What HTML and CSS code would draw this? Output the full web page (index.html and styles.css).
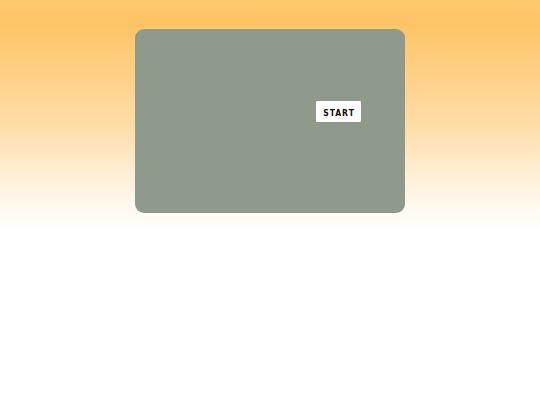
FILE: index.html
```html
<!DOCTYPE html>
<html>
<head>
<meta charset="utf-8">
<link rel="stylesheet" href="styles.css">
</head>
<body>
<div class="stage">
  <div class="game">
    <button class="start">START</button>
  </div>
</div>
</body>
</html>
```
FILE: styles.css
```css
html, body {
  margin: 0;
  padding: 0;
  height: 100%;
}
body {
  background: linear-gradient(to bottom, #fec96d 0%, #fec466 6%, #fedba5 30%, #fff1dc 45%, #fffbf5 53%, #ffffff 57%, #ffffff 100%);
  font-family: "DejaVu Sans", sans-serif;
}
.stage {
  padding-top: 29px;
  display: flex;
  justify-content: center;
}
.game {
  position: relative;
  width: 270px;
  height: 184px;
  background: #8f9a8c;
  border-radius: 9px;
}
.start {
  position: absolute;
  left: 181px;
  top: 72px;
  width: 45px;
  height: 21px;
  padding: 2px 0 0 1px;
  border: none;
  border-radius: 1px;
  background: #ffffff;
  color: #111111;
  font-family: "DejaVu Sans Condensed", "DejaVu Sans", sans-serif;
  font-weight: 600;
  font-size: 8.5px;
  letter-spacing: 1px;
}
```
